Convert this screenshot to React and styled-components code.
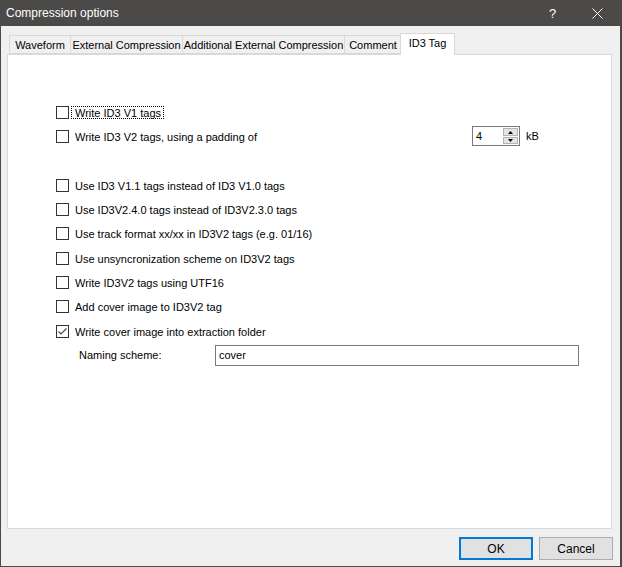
import React from "react";
import styled, { createGlobalStyle } from "styled-components";

const GlobalStyle = createGlobalStyle`
  html, body { margin: 0; padding: 0; background: #f0f0f0; }
  body { font-family: "Liberation Sans", Arial, sans-serif; font-size: 11px; color: #000; }
  * { box-sizing: border-box; }
`;

const Window = styled.div`
  width: 622px;
  height: 567px;
  display: flex;
  flex-direction: column;
  background: #f0f0f0;
  border: 1px solid #4b4a48;
  border-right-width: 2px;
`;

const TitleBar = styled.div`
  height: 25px;
  flex: 0 0 25px;
  background: #4b4a48;
  display: flex;
  align-items: center;
  color: #fff;
`;

const Title = styled.div`
  flex: 1;
  padding-left: 5px;
  font-family: "Segoe UI", "Liberation Sans", Arial, sans-serif;
  font-size: 12px;
  line-height: 25px;
  margin-top: -1px;
`;

const TitleButton = styled.div`
  width: 45px;
  height: 25px;
  display: flex;
  align-items: center;
  justify-content: center;
  color: #fff;
  font-size: 13px;
  font-family: "Segoe UI", "Liberation Sans", Arial, sans-serif;
`;

const Body = styled.div`
  flex: 1;
  display: flex;
  flex-direction: column;
  padding: 7px 8px 0 6px;
`;

const TabStrip = styled.div`
  height: 21px;
  flex: 0 0 21px;
  display: flex;
  align-items: flex-end;
  padding-left: 2px;
  position: relative;
  z-index: 1;
`;

const Tab = styled.div`
  width: ${(p) => p.$w}px;
  height: ${(p) => (p.$active ? 22 : 19)}px;
  margin: ${(p) => (p.$active ? "0 -2px -1px -2px" : "0 0 0 -1px")};
  background: ${(p) => (p.$active ? "#fff" : "#f0f0f0")};
  border: 1px solid #d9d9d9;
  border-bottom: ${(p) => (p.$active ? "none" : "1px solid #d9d9d9")};
  display: flex;
  align-items: center;
  justify-content: center;
  padding-bottom: ${(p) => (p.$active ? 3 : 0)}px;
  white-space: nowrap;
  position: relative;
  z-index: ${(p) => (p.$active ? 2 : 1)};
  &:first-child { margin-left: 0; }
`;

const Panel = styled.div`
  height: 475px;
  flex: 0 0 475px;
  background: #fff;
  border: 1px solid #d9d9d9;
  padding: 45px 0 0 48px;
  display: flex;
  flex-direction: column;
`;

const Row = styled.div`
  height: 24.33px;
  flex: 0 0 24.33px;
  display: flex;
  align-items: center;
`;

const CheckLabel = styled.label`
  display: flex;
  align-items: center;
  flex: ${(p) => (p.$w ? `0 0 ${p.$w}px` : "0 0 auto")};
`;

const Box = styled.span`
  width: 13px;
  height: 13px;
  flex: 0 0 13px;
  border: 1px solid #333;
  background: #fff;
  display: flex;
  align-items: center;
  justify-content: center;
`;

const Text = styled.span`
  margin-left: 2px;
  padding: 0 2px 0 3px;
  height: 13px;
  line-height: 12px;
  border: 1px dotted ${(p) => (p.$focus ? "#000" : "transparent")};
  white-space: nowrap;
`;

const Spinner = styled.div`
  width: 48px;
  height: 20px;
  border: 1px solid #7a7a7a;
  display: flex;
  background: #fff;
`;

const SpinValue = styled.div`
  flex: 1;
  padding: 0 0 0 3px;
  line-height: 18px;
`;

const SpinButtons = styled.div`
  width: 16px;
  display: flex;
  flex-direction: column;
  gap: 1px;
  padding: 1px 1px 1px 0;
`;

const SpinButton = styled.div`
  flex: 1;
  background: #e5e5e5;
  border: 1px solid #b4b4b4;
  display: flex;
  align-items: center;
  justify-content: center;
`;

const Unit = styled.span`
  margin-left: 6px;
`;

const Spacer = styled.div`
  height: 24.33px;
  flex: 0 0 24.33px;
`;

const FieldLabel = styled.span`
  flex: 0 0 136px;
  padding-left: 23px;
  box-sizing: content-box;
`;

const TextInput = styled.div`
  width: 364px;
  height: 21px;
  border: 1px solid #7a7a7a;
  padding-left: 3px;
  line-height: 19px;
  background: #fff;
`;

const Footer = styled.div`
  display: flex;
  justify-content: flex-end;
  gap: 6px;
  padding: 8px 0 0 0;
  margin-right: -1px;
`;

const Button = styled.div`
  width: 74px;
  height: 23px;
  background: #e1e1e1;
  border: ${(p) => (p.$default ? "2px solid #0078d7" : "1px solid #adadad")};
  display: flex;
  align-items: center;
  justify-content: center;
  font-size: 12px;
  font-family: "Segoe UI", "Liberation Sans", Arial, sans-serif;
`;

const Check = ({ checked, label, focus, w }) => (
  <CheckLabel $w={w}>
    <Box>
      {checked && (
        <svg width="11" height="11" viewBox="0 0 11 11">
          <path d="M1.5 5.5 L4 8 L9.5 2.5" fill="none" stroke="#444" strokeWidth="1.1" />
        </svg>
      )}
    </Box>
    <Text $focus={focus}>{label}</Text>
  </CheckLabel>
);

const tabs = [
  { label: "Waveform", w: 62 },
  { label: "External Compression", w: 113 },
  { label: "Additional External Compression", w: 163 },
  { label: "Comment", w: 58 },
  { label: "ID3 Tag", w: 55, active: true },
];

const options = [
  "Use ID3 V1.1 tags instead of ID3 V1.0 tags",
  "Use ID3V2.4.0 tags instead of ID3V2.3.0 tags",
  "Use track format xx/xx in ID3V2 tags (e.g. 01/16)",
  "Use unsyncronization scheme on ID3V2 tags",
  "Write ID3V2 tags using UTF16",
  "Add cover image to ID3V2 tag",
];

export default function App() {
  return (
    <>
      <GlobalStyle />
      <Window>
        <TitleBar>
          <Title>Compression options</Title>
          <TitleButton>?</TitleButton>
          <TitleButton>
            <svg width="11" height="11" viewBox="0 0 11 11">
              <path d="M0.5 0.5 L10.5 10.5 M10.5 0.5 L0.5 10.5" stroke="#fff" strokeWidth="1" />
            </svg>
          </TitleButton>
        </TitleBar>
        <Body>
          <TabStrip>
            {tabs.map((t) => (
              <Tab key={t.label} $w={t.w} $active={t.active}>
                {t.label}
              </Tab>
            ))}
          </TabStrip>
          <Panel>
            <Row>
              <Check label="Write ID3 V1 tags" focus />
            </Row>
            <Row>
              <Check label="Write ID3 V2 tags, using a padding of" w={416} />
              <Spinner>
                <SpinValue>4</SpinValue>
                <SpinButtons>
                  <SpinButton>
                    <svg width="5" height="3" viewBox="0 0 5 3">
                      <path d="M2.5 0 L5 3 L0 3 Z" fill="#000" />
                    </svg>
                  </SpinButton>
                  <SpinButton>
                    <svg width="5" height="3" viewBox="0 0 5 3">
                      <path d="M0 0 L5 0 L2.5 3 Z" fill="#000" />
                    </svg>
                  </SpinButton>
                </SpinButtons>
              </Spinner>
              <Unit>kB</Unit>
            </Row>
            <Spacer />
            {options.map((o) => (
              <Row key={o}>
                <Check label={o} />
              </Row>
            ))}
            <Row>
              <Check label="Write cover image into extraction folder" checked />
            </Row>
            <Row>
              <FieldLabel>Naming scheme:</FieldLabel>
              <TextInput>cover</TextInput>
            </Row>
          </Panel>
          <Footer>
            <Button $default>OK</Button>
            <Button>Cancel</Button>
          </Footer>
        </Body>
      </Window>
    </>
  );
}
